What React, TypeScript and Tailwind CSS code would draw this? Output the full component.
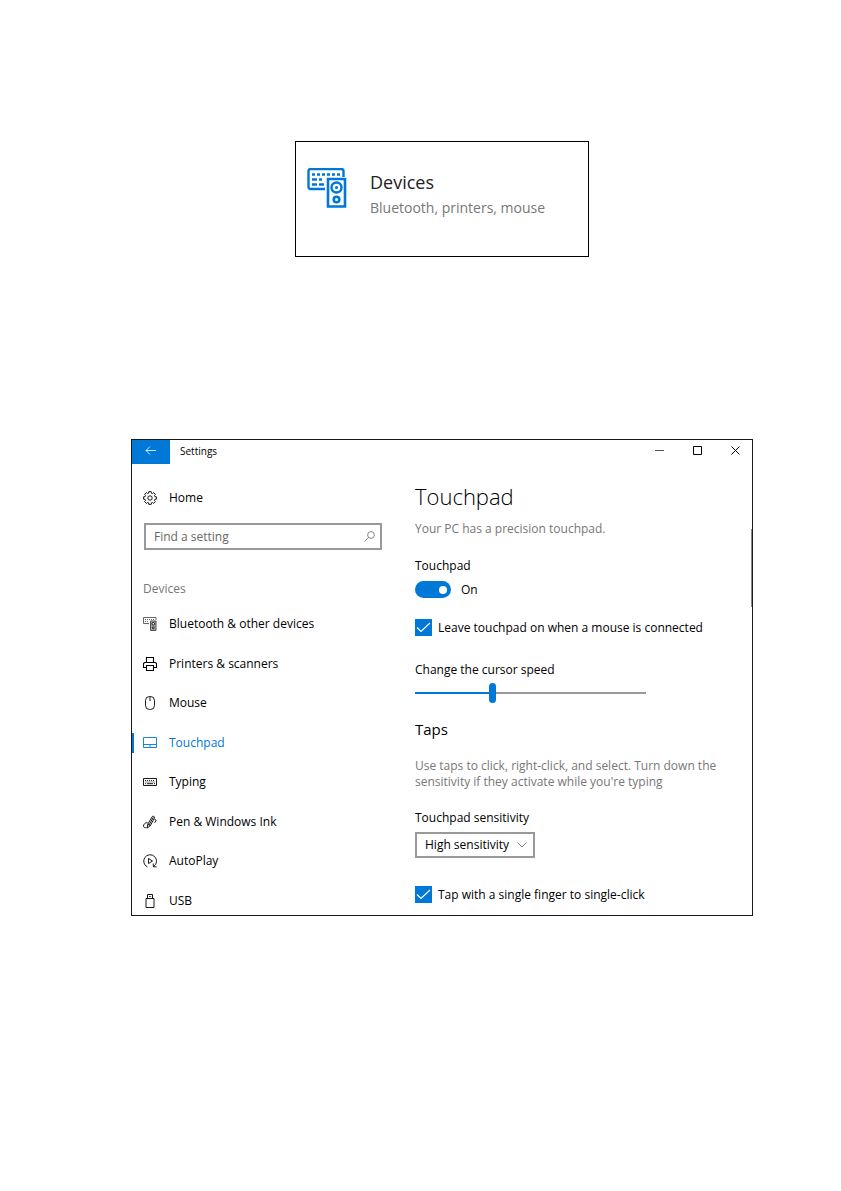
import { useState } from "react";
import type { ReactNode } from "react";

function DevicesIcon({ className }: { className: string }) {
  return (
    <svg viewBox="0 0 40 40" fill="none" stroke="currentColor" className={className} aria-hidden>
      <path d="M18 21H3.5a2 2 0 0 1-2-2V3a2 2 0 0 1 2-2h31a2 2 0 0 1 2 2v6" strokeWidth="2.4" />
      <path d="M5 6.5h29" strokeWidth="2.6" strokeDasharray="3 2" />
      <path d="M5 11.5h5M12 11.5h3M5 16.5h5M12 16.5h5" strokeWidth="2.6" />
      <path d="M21 11h17v27.5h-17z" strokeWidth="2.6" />
      <circle cx="29.5" cy="19.5" r="5" strokeWidth="2.4" />
      <circle cx="29.5" cy="19.5" r="1.6" fill="currentColor" stroke="none" />
      <circle cx="29.5" cy="31.5" r="2.8" strokeWidth="2.6" />
    </svg>
  );
}

function NavIcon({ children }: { children: ReactNode }) {
  return (
    <svg
      viewBox="0 0 14 14"
      fill="none"
      stroke="currentColor"
      strokeWidth="0.9"
      className="h-3.5 w-3.5 shrink-0"
      aria-hidden
    >
      {children}
    </svg>
  );
}

function GearIcon() {
  return (
    <NavIcon>
      <path d="M5.8.6h2.4l.2 1.6 1 .4 1.3-1 1.700 1.700-1 1.300.4 1 1.600.2v2.400l-1.600.2-.4 1 1 1.300-1.700 1.700-1.300-1-1 .4-.2 1.600H5.800l-.2-1.600-1-.4-1.300 1-1.700-1.700 1-1.300-.4-1L.6 8.200V5.800l1.600-.2.4-1-1-1.300 1.700-1.700 1.300 1 1-.4z" />
      <circle cx="7" cy="7" r="2.200" />
    </NavIcon>
  );
}

const NAV_ITEMS: { label: string; icon: ReactNode }[] = [
  {
    label: "Bluetooth & other devices",
    icon: (
      <NavIcon>
        <path d="M6 6.500H.5v-6h12.500V3" stroke="#555" />
        <path d="M2 2.500h10M2 4.500h4" stroke="#555" strokeDasharray="1 1" />
        <path d="M7.500 4h5.500v9.500H7.500z" stroke="#444" fill="#aaa" />
        <circle cx="10.250" cy="6.800" r="1.300" fill="#fff" />
        <circle cx="10.250" cy="10.800" r="0.900" fill="#fff" />
      </NavIcon>
    ),
  },
  {
    label: "Printers & scanners",
    icon: (
      <NavIcon>
        <path d="M3.500 5.500v-5h7v5M3 10.500H.5v-4l1-1h11l1 1v4H11M3.500 8.500h7v5h-7z" strokeWidth="1.100" />
      </NavIcon>
    ),
  },
  {
    label: "Mouse",
    icon: (
      <NavIcon>
        <rect x="2.500" y="0.500" width="9" height="13" rx="4" />
        <path d="M7 .5v4.500" />
      </NavIcon>
    ),
  },
  {
    label: "Touchpad",
    icon: (
      <NavIcon>
        <path d="M.5 1.500h13v10H.5zM.5 8.500h13M7 8.500v3" />
      </NavIcon>
    ),
  },
  {
    label: "Typing",
    icon: (
      <NavIcon>
        <path d="M.5 3.500h13v7H.5z" />
        <path d="M2 5.500h10M2.500 7h9.500" strokeDasharray="1 1" />
        <path d="M2 8.700h1M4 8.700h6M11 8.700h1" />
      </NavIcon>
    ),
  },
  {
    label: "Pen & Windows Ink",
    icon: (
      <NavIcon>
        <path d="M4.700 9.300 9.300 1.500c.6-1 2.700.1 2.200 1.300L7.300 10.700l-3.100 2.400zM4.700 9.300l2.600 1.400M10.300 2.300 6 10M11.500 4.300l1.700.9-1.500 2.600" />
        <path d="M4.500 7.500C2 7.800.5 9.300.5 11c0 1.300 1.300 2.100 3 1.600" />
      </NavIcon>
    ),
  },
  {
    label: "AutoPlay",
    icon: (
      <NavIcon>
        <path d="M4.500 13A6.400 6.400 0 1 1 10.800 12.400M13.500 12.800h-3.200V9.500M5.500 4.500v5L9.500 7z" />
      </NavIcon>
    ),
  },
  {
    label: "USB",
    icon: (
      <NavIcon>
        <path d="M3 4.500h8v9H3zM4.500 4.500v-4h5v4M6 2.500h.8M7.400 2.500h.8" />
      </NavIcon>
    ),
  },
];

function CheckRow({ id, label }: { id: string; label: string }) {
  return (
    <div className="flex h-[17px] items-center gap-1.5">
      <span className="relative h-[17px] w-[17px] shrink-0">
        <input
          id={id}
          type="checkbox"
          defaultChecked
          className="peer block h-full w-full appearance-none border-2 border-[#999] checked:border-0 checked:bg-[#0078d7]"
        />
        <svg
          viewBox="0 0 17 17"
          fill="none"
          stroke="#fff"
          strokeWidth="1.2"
          className="pointer-events-none absolute inset-0 hidden peer-checked:block"
          aria-hidden
        >
          <path d="M2 8.500l4 4L15 4" />
        </svg>
      </span>
      <label htmlFor={id}>{label}</label>
    </div>
  );
}

function DevicesCard() {
  return (
    <a
      href="#devices"
      className="flex h-[116px] w-[294px] max-w-full items-start border border-black pl-[11px] pt-6"
    >
      <DevicesIcon className="mt-[2px] h-10 w-10 shrink-0 text-[#0078d7]" />
      <span className="ml-[23px] flex flex-col">
        <span className="text-lg leading-8 text-[#222]">Devices</span>
        <span className="text-sm leading-5 text-[#777]">
          Bluetooth, printers, mouse
        </span>
      </span>
    </a>
  );
}

function TitleBar() {
  return (
    <header className="flex h-6 items-start">
      <button
        type="button"
        aria-label="Back"
        className="flex h-6 w-[38px] items-start justify-center bg-[#0078d7] pt-1.5 text-white"
      >
        <svg viewBox="0 0 12 10" fill="none" stroke="currentColor" strokeWidth="0.8" className="h-2.5 w-3" aria-hidden>
          <path d="M11 4.500H1M5 .5l-4 4 4 4" />
        </svg>
      </button>
      <span className="ml-2.5 flex-1 pt-[3px] text-[10px] leading-4">Settings</span>
      <div className="flex gap-1">
        <button type="button" aria-label="Minimize" className="flex h-[21px] w-[34px] items-center justify-center">
          <svg viewBox="0 0 9 9" stroke="#555" className="h-[9px] w-[9px]" aria-hidden>
            <path d="M0 4.500h9" />
          </svg>
        </button>
        <button type="button" aria-label="Maximize" className="flex h-[21px] w-[34px] items-center justify-center">
          <svg viewBox="0 0 9 9" fill="none" stroke="currentColor" className="h-[9px] w-[9px]" aria-hidden>
            <path d="M.5.5h8v8h-8z" />
          </svg>
        </button>
        <button type="button" aria-label="Close" className="flex h-[21px] w-[34px] items-center justify-center">
          <svg viewBox="0 0 9 9" stroke="currentColor" className="h-[9px] w-[9px]" aria-hidden>
            <path d="M.5.5l8 8M8.500.5l-8 8" />
          </svg>
        </button>
      </div>
    </header>
  );
}

function Sidebar() {
  return (
    <nav className="flex w-[250px] shrink-0 flex-col">
      <a href="#home" className="mt-[26px] flex items-center gap-3 pl-[11px] leading-4">
        <GearIcon />
        Home
      </a>

      <div className="relative ml-3 mt-[17px]">
        <input
          type="text"
          aria-label="Find a setting"
          placeholder="Find a setting"
          className="block h-[27px] w-full border-2 border-[#999] pl-2 pr-7 placeholder:text-[#666]"
        />
        <svg
          viewBox="0 0 11 11"
          fill="none"
          stroke="#777"
          strokeWidth="0.9"
          className="pointer-events-none absolute right-[7px] top-2 h-[11px] w-[11px]"
          aria-hidden
        >
          <circle cx="7" cy="4" r="3.400" />
          <path d="M4.500 6.500.5 10.500" />
        </svg>
      </div>

      <h2 className="mt-[31px] pl-[11px] leading-4 text-[#777]">Devices</h2>

      <ul className="mt-[13px] flex flex-1 flex-col justify-between">
        {NAV_ITEMS.map(({ label, icon }) => {
          const active = label === "Touchpad";
          return (
            <li key={label}>
              <a
                href="#"
                aria-current={active ? "page" : undefined}
                className={
                  active
                    ? "relative flex h-7 items-center gap-3 pl-[11px] text-[#0078d7] before:absolute before:left-0 before:h-5 before:w-0.5 before:bg-[#0078d7]"
                    : "flex h-7 items-center gap-3 pl-[11px]"
                }
              >
                {icon}
                {label}
              </a>
            </li>
          );
        })}
      </ul>
    </nav>
  );
}

function TouchpadPanel() {
  const [on, setOn] = useState(true);
  const [speed, setSpeed] = useState(33);

  return (
    <main className="ml-[33px] min-w-0 flex-1 pb-3 pr-6 pt-4">
      <h1 className="text-[22px] font-light leading-8">Touchpad</h1>
      <p className="mt-[9px] text-[#777]">Your PC has a precision touchpad.</p>

      <p id="touchpad-label" className="mt-[21px]">
        Touchpad
      </p>
      <div className="mt-[7px] flex h-[17px] items-center gap-2.5">
        <button
          type="button"
          role="switch"
          aria-checked={on}
          aria-labelledby="touchpad-label"
          onClick={() => setOn(!on)}
          className={
            on
              ? "flex h-[17px] w-9 items-center justify-end rounded-full bg-[#0078d7] px-1"
              : "flex h-[17px] w-9 items-center rounded-full bg-[#999] px-1"
          }
        >
          <span className="h-2 w-2 rounded-full bg-white" />
        </button>
        <span>{on ? "On" : "Off"}</span>
      </div>

      <div className="mt-[21px]">
        <CheckRow id="leave-on" label="Leave touchpad on when a mouse is connected" />
      </div>

      <label htmlFor="cursor-speed" className="mt-[26px] block">
        Change the cursor speed
      </label>
      <input
        id="cursor-speed"
        type="range"
        value={speed}
        onChange={(e) => setSpeed(Number(e.target.value))}
        style={{
          backgroundImage: `linear-gradient(to right, #0078d7 ${speed}%, #999 ${speed}%)`,
        }}
        className="mt-[5px] block h-5 w-[231px] max-w-full appearance-none bg-[length:100%_2px] bg-center bg-no-repeat [&::-webkit-slider-thumb]:h-5 [&::-webkit-slider-thumb]:w-[7px] [&::-webkit-slider-thumb]:appearance-none [&::-webkit-slider-thumb]:rounded-full [&::-webkit-slider-thumb]:bg-[#0078d7]"
      />

      <h2 className="mt-4 text-[15px] leading-5">Taps</h2>
      <p className="mt-[19px] text-[#777]">
        Use taps to click, right-click, and select. Turn down the sensitivity if
        they activate while you're typing
      </p>

      <label htmlFor="sensitivity" className="mt-5 block">
        Touchpad sensitivity
      </label>
      <div className="relative mt-1.5 w-[120px]">
        <select
          id="sensitivity"
          className="block h-[26px] w-full appearance-none border-2 border-[#999] bg-white pl-2"
        >
          <option>High sensitivity</option>
          <option>Medium sensitivity</option>
          <option>Low sensitivity</option>
        </select>
        <svg
          viewBox="0 0 10 6"
          fill="none"
          stroke="#777"
          strokeWidth="0.9"
          className="pointer-events-none absolute right-2 top-[10px] h-1.5 w-2.5"
          aria-hidden
        >
          <path d="M.5.5 5 5 9.500.5" />
        </svg>
      </div>

      <div className="mt-7">
        <CheckRow id="single-tap" label="Tap with a single finger to single-click" />
      </div>
    </main>
  );
}

export default function App() {
  return (
    <div className="flex min-h-screen flex-col items-center bg-white pb-10 pl-[131px] pr-[88px] pt-[141px] font-['Open_Sans','Noto_Sans',sans-serif] text-xs leading-4 text-black">
      <DevicesCard />

      <section
        aria-label="Settings"
        className="relative mt-[182px] w-full border border-[#1a1a1a] bg-white"
      >
        <TitleBar />
        <div className="flex">
          <Sidebar />
          <TouchpadPanel />
        </div>
        <span className="absolute right-0 top-[89px] h-[78px] w-px bg-[#888]" aria-hidden />
      </section>
    </div>
  );
}
